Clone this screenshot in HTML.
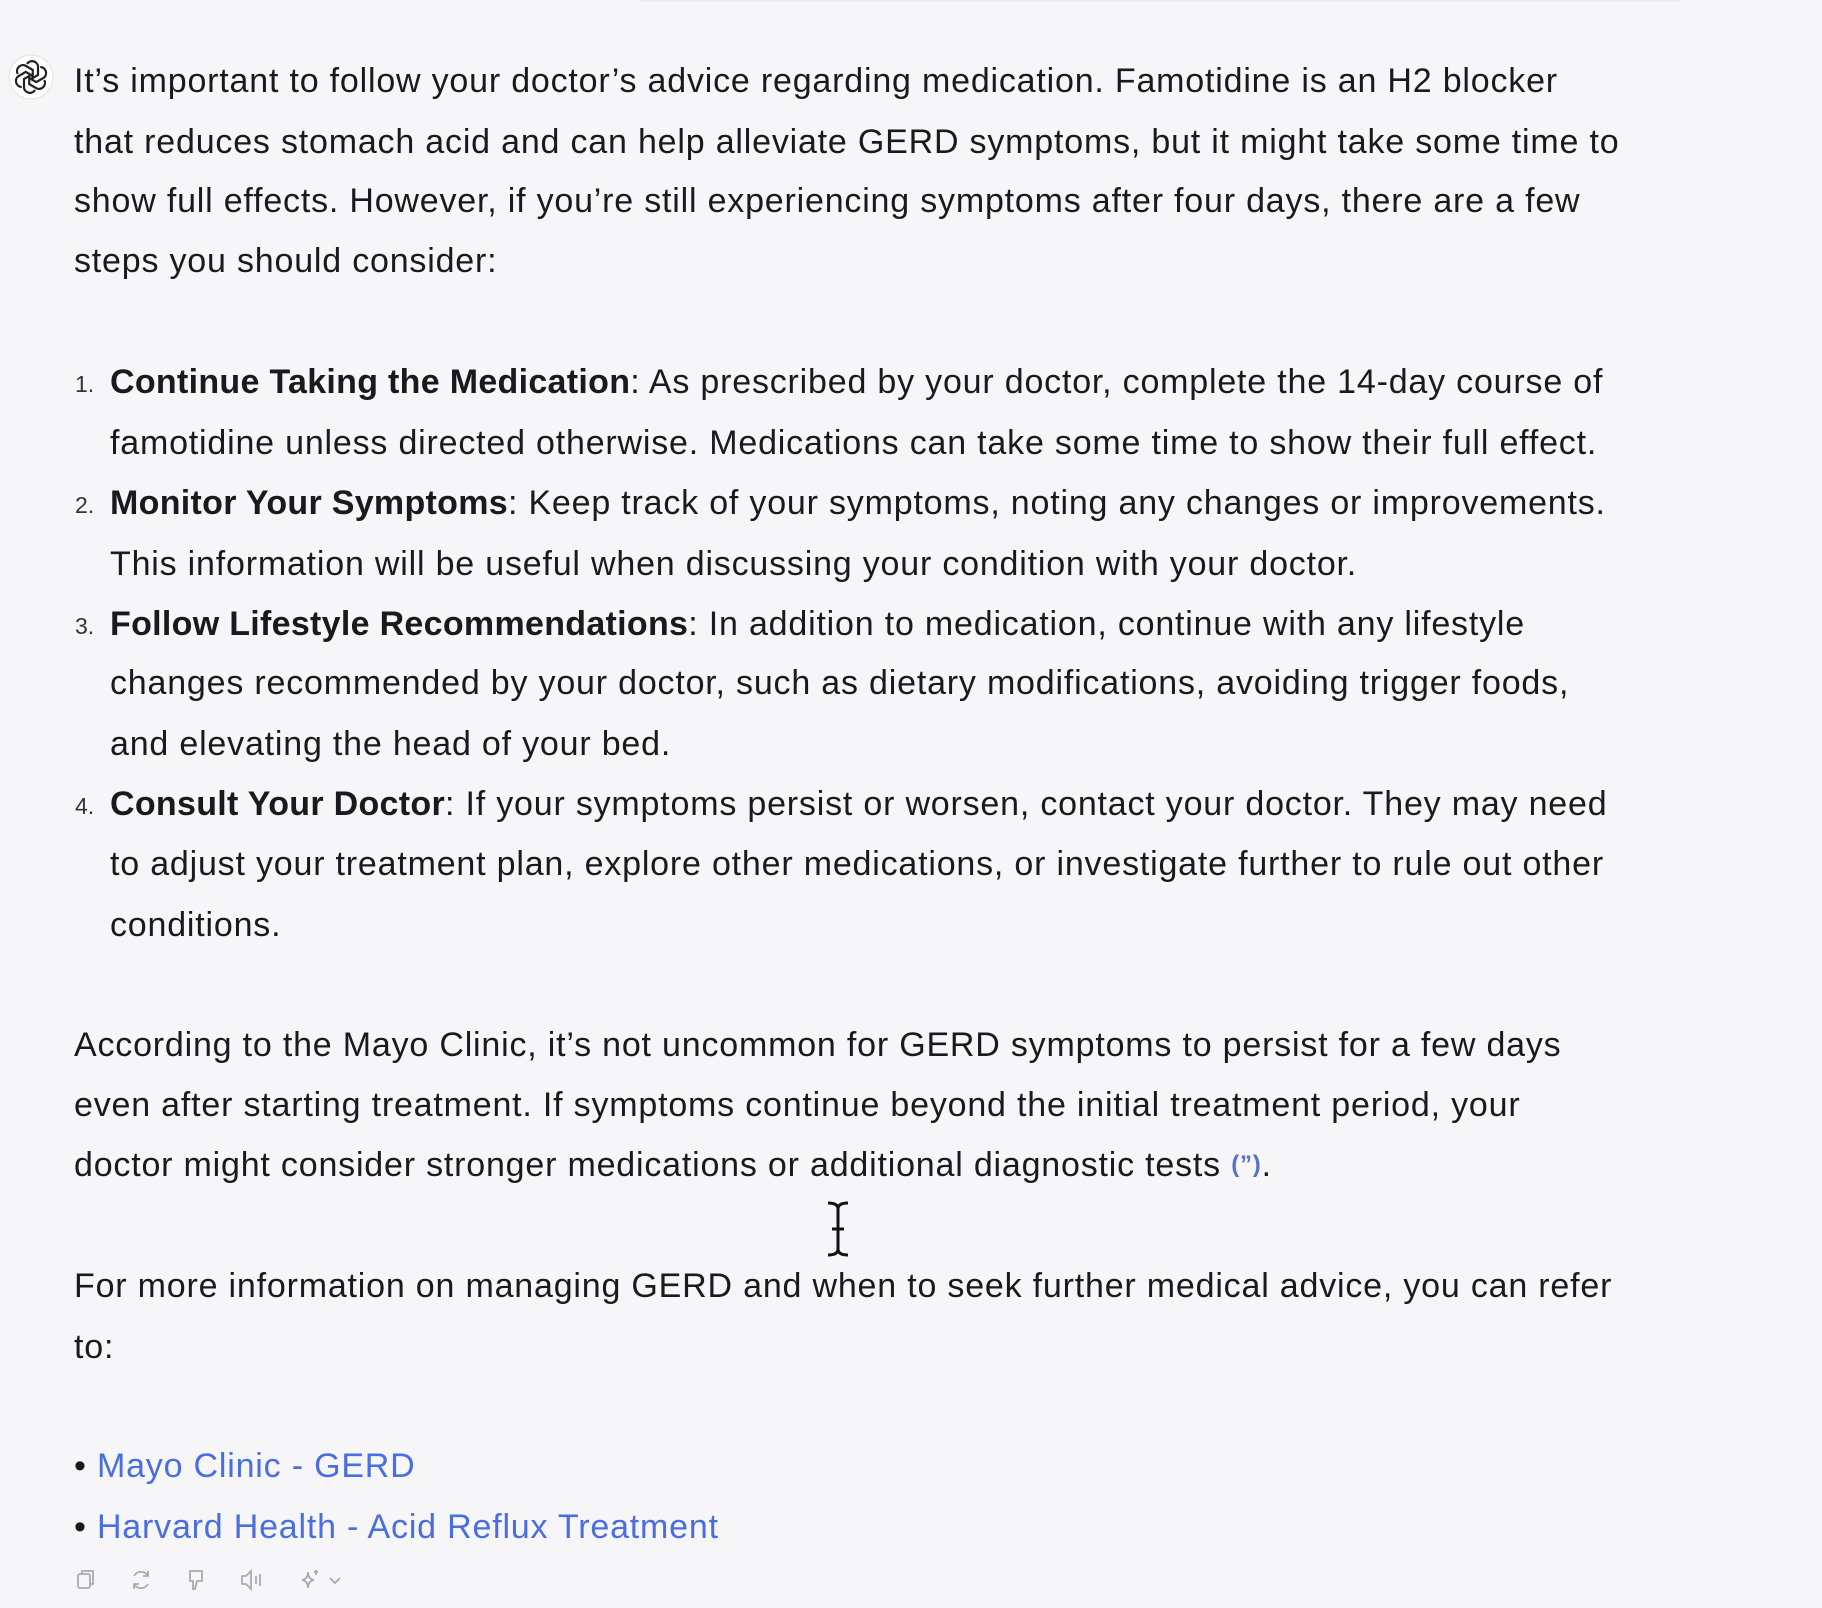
<!DOCTYPE html>
<html><head><meta charset="utf-8"><style>
html,body{margin:0;padding:0;width:1822px;height:1608px;background:#f6f6f8;overflow:hidden}
body{position:relative;font-family:"Liberation Sans",sans-serif;color:#1a1a1c;font-size:34px}
.l{position:absolute;height:60px;line-height:60px;white-space:nowrap;letter-spacing:0.8px}
.n{position:absolute;font-size:23px;line-height:60px;height:60px;color:#333}
b{font-weight:bold;letter-spacing:0.3px}
a{color:#4a6ee0;text-decoration:none}
.cite{color:#5a6fc8;font-size:24px;font-weight:bold;vertical-align:4px}
</style></head><body>
<div style="position:absolute;left:640px;top:0;width:1040px;height:2px;background:#ececee"></div>
<svg style="position:absolute;left:8px;top:54px" width="46" height="46" viewBox="0 0 46 46">
<circle cx="23" cy="23" r="22" fill="#fff" stroke="#e2e2e4"/>
<g fill="none" stroke="#222" stroke-width="2.2" transform="translate(23 23)">
<g id="p"><path d="M-4 -13 a6 6 0 0 1 11 2 v9 l-7 4"/></g>
<use href="#p" transform="rotate(60)"/><use href="#p" transform="rotate(120)"/><use href="#p" transform="rotate(180)"/><use href="#p" transform="rotate(240)"/><use href="#p" transform="rotate(300)"/>
</g></svg>
<div class="l" style="left:74px;top:51px">It’s important to follow your doctor’s advice regarding medication. Famotidine is an H2 blocker</div>
<div class="l" style="left:74px;top:112px">that reduces stomach acid and can help alleviate GERD symptoms, but it might take some time to</div>
<div class="l" style="left:74px;top:171px">show full effects. However, if you’re still experiencing symptoms after four days, there are a few</div>
<div class="l" style="left:74px;top:231px">steps you should consider:</div>

<div class="n" style="left:75px;top:354px">1.</div>
<div class="l" style="left:110px;top:352px"><b>Continue Taking the Medication</b>: As prescribed by your doctor, complete the 14-day course of</div>
<div class="l" style="left:110px;top:413px">famotidine unless directed otherwise. Medications can take some time to show their full effect.</div>
<div class="n" style="left:75px;top:475px">2.</div>
<div class="l" style="left:110px;top:473px"><b>Monitor Your Symptoms</b>: Keep track of your symptoms, noting any changes or improvements.</div>
<div class="l" style="left:110px;top:534px">This information will be useful when discussing your condition with your doctor.</div>
<div class="n" style="left:75px;top:596px">3.</div>
<div class="l" style="left:110px;top:594px"><b>Follow Lifestyle Recommendations</b>: In addition to medication, continue with any lifestyle</div>
<div class="l" style="left:110px;top:653px">changes recommended by your doctor, such as dietary modifications, avoiding trigger foods,</div>
<div class="l" style="left:110px;top:714px">and elevating the head of your bed.</div>
<div class="n" style="left:75px;top:776px">4.</div>
<div class="l" style="left:110px;top:774px"><b>Consult Your Doctor</b>: If your symptoms persist or worsen, contact your doctor. They may need</div>
<div class="l" style="left:110px;top:834px">to adjust your treatment plan, explore other medications, or investigate further to rule out other</div>
<div class="l" style="left:110px;top:895px">conditions.</div>

<div class="l" style="left:74px;top:1015px">According to the Mayo Clinic, it’s not uncommon for GERD symptoms to persist for a few days</div>
<div class="l" style="left:74px;top:1075px">even after starting treatment. If symptoms continue beyond the initial treatment period, your</div>
<div class="l" style="left:74px;top:1135px">doctor might consider stronger medications or additional diagnostic tests <span class="cite">(”)</span>.</div>

<svg style="position:absolute;left:825px;top:1200px" width="26" height="58" viewBox="0 0 26 58" fill="none" stroke="#111" stroke-width="3">
<path d="M3 3 q10 0 10 6 v40 q0 6 -10 6 M23 3 q-10 0 -10 6 M23 55 q-10 0 -10 -6 M7 29 h12"/></svg>

<div class="l" style="left:74px;top:1256px">For more information on managing GERD and when to seek further medical advice, you can refer</div>
<div class="l" style="left:74px;top:1317px">to:</div>

<div class="l" style="left:74px;top:1436px">•&nbsp;<a>Mayo Clinic - GERD</a></div>
<div class="l" style="left:74px;top:1497px">•&nbsp;<a>Harvard Health - Acid Reflux Treatment</a></div>

<svg style="position:absolute;left:74px;top:1566px" width="280" height="28" viewBox="0 0 280 28" fill="none" stroke="#aaa" stroke-width="1.8">
<rect x="4" y="8" width="12" height="14" rx="2"/><path d="M8 8 V5 h11 v13 h-3"/>
<path d="M60 10 a8 8 0 0 1 14 0 M74 18 a8 8 0 0 1 -14 0 M74 5 v5 h-5 M60 23 v-5 h5"/>
<path d="M116 5 h12 v10 h-5 l-2 8 h-2 v-8 h-3 z"/>
<path d="M168 10 h4 l5 -5 v18 l-5 -5 h-4 z M182 10 v8 M186 8 v12"/>
<path d="M228 14 q6 -1 6 -8 q0 7 6 8 q-6 1 -6 8 q0 -7 -6 -8 z M242 4 v5 M240 6 h4"/>
<path d="M256 12 l5 5 l5 -5"/>
</svg>
</body></html>
